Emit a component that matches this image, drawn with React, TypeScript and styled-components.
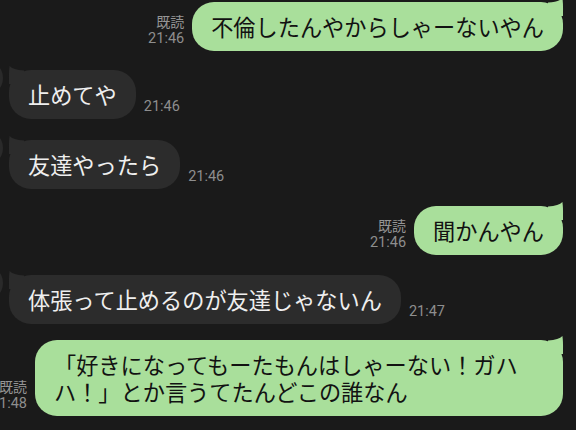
import styled, { createGlobalStyle } from "styled-components";

const GlobalStyle = createGlobalStyle`
  html, body {
    margin: 0;
    padding: 0;
    background: #1a1a1a;
    overflow: hidden;
  }
  body {
    font-family: Roboto, "Noto Sans CJK JP", sans-serif;
  }
`;

const GREEN = "#a9df9b";
const DARK = "#2c2c2c";

const Chat = styled.div`
  width: 576px;
  height: 430px;
  display: flex;
  flex-direction: column;
  box-sizing: border-box;
`;

const Row = styled.div<{ $mine?: boolean; $top: number }>`
  display: flex;
  align-items: flex-end;
  justify-content: ${(p) => (p.$mine ? "flex-end" : "flex-start")};
  gap: 8px;
  margin-top: ${(p) => p.$top}px;
  padding: ${(p) => (p.$mine ? "0 13px 0 0" : "0")};
`;

const Avatar = styled.div`
  flex-shrink: 0;
  align-self: flex-start;
  width: 36px;
  height: 36px;
  border-radius: 50%;
  background: #2a2a2a;
  margin: -10px -2px 0 -33px;
`;

const Bubble = styled.div<{ $mine?: boolean }>`
  position: relative;
  flex-shrink: 0;
  box-sizing: border-box;
  max-width: 528px;
  padding: 11px 19px;
  border-radius: 22px;
  background: ${(p) => (p.$mine ? GREEN : DARK)};
  color: ${(p) => (p.$mine ? "#121212" : "#efefef")};
  font-family: "Noto Sans CJK JP", sans-serif;
  font-size: 22.2px;
  line-height: 27px;
`;

const TailSvg = styled.svg<{ $mine?: boolean }>`
  position: absolute;
  top: -4px;
  width: 18px;
  height: 18px;
  ${(p) => (p.$mine ? "right: -1px; transform: scaleX(-1);" : "left: -1px;")}
`;

const Meta = styled.div<{ $mine?: boolean }>`
  flex-shrink: 0;
  display: flex;
  flex-direction: column;
  align-items: ${(p) => (p.$mine ? "flex-end" : "flex-start")};
  padding-bottom: 4px;
  color: #8e8e8e;
  font-size: 14.5px;
  line-height: 17px;
  white-space: nowrap;
`;

const Read = styled.span`
  font-family: "Noto Sans CJK JP", sans-serif;
  font-size: 14px;
  color: #959595;
`;

function Tail({ mine }: { mine?: boolean }) {
  return (
    <TailSvg $mine={mine} viewBox="0 0 18 18">
      <path
        d="M1.6 0 Q5 4 16 4.4 L16 18 L1 18 L1 14 Q0.8 5 1.6 0 Z"
        fill={mine ? GREEN : DARK}
      />
    </TailSvg>
  );
}

interface Msg {
  mine: boolean;
  text: string;
  time: string;
  top: number;
}

const messages: Msg[] = [
  { mine: true, text: "不倫したんやからしゃーないやん", time: "21:46", top: 2 },
  { mine: false, text: "止めてや", time: "21:46", top: 19 },
  { mine: false, text: "友達やったら", time: "21:46", top: 21 },
  { mine: true, text: "聞かんやん", time: "21:46", top: 17 },
  { mine: false, text: "体張って止めるのが友達じゃないん", time: "21:47", top: 20 },
  {
    mine: true,
    text: "「好きになってもーたもんはしゃーない！ガハハ！」とか言うてたんどこの誰なん",
    time: "21:48",
    top: 16,
  },
];

export default function App() {
  return (
    <>
      <GlobalStyle />
      <Chat lang="ja">
        {messages.map((m, i) =>
          m.mine ? (
            <Row key={i} $mine $top={m.top}>
              <Meta $mine>
                <Read>既読</Read>
                <span>{m.time}</span>
              </Meta>
              <Bubble $mine>
                <Tail mine />
                {m.text}
              </Bubble>
            </Row>
          ) : (
            <Row key={i} $top={m.top}>
              <Avatar />
              <Bubble>
                <Tail />
                {m.text}
              </Bubble>
              <Meta>
                <span>{m.time}</span>
              </Meta>
            </Row>
          )
        )}
      </Chat>
    </>
  );
}
